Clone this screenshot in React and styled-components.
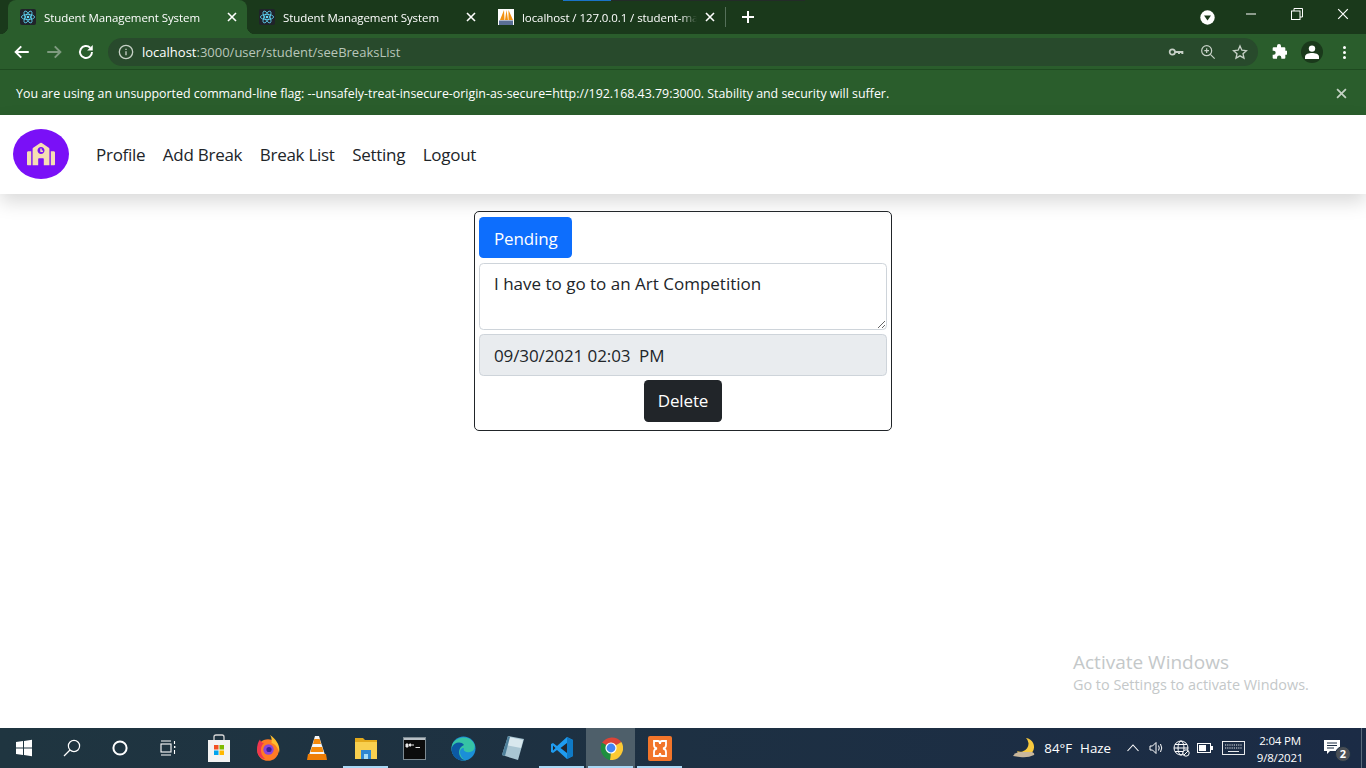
import styled, { createGlobalStyle } from "styled-components";
import { FaSchool } from "react-icons/fa";

const UI_FONT = `"Open Sans", "Noto Sans", sans-serif`;

const GlobalStyle = createGlobalStyle`
  html, body { margin: 0; padding: 0; background: #fff; }
  * { box-sizing: border-box; }
  body { font-family: ${UI_FONT}; }
`;

const ReactFavicon = () => (
  <svg width="16" height="16" viewBox="0 0 16 16">
    <rect width="16" height="16" rx="2" fill="#20232a" />
    <g fill="none" stroke="#61dafb" strokeWidth="0.8">
      <ellipse cx="8" cy="8" rx="6.6" ry="2.6" />
      <ellipse cx="8" cy="8" rx="6.6" ry="2.6" transform="rotate(60 8 8)" />
      <ellipse cx="8" cy="8" rx="6.6" ry="2.6" transform="rotate(120 8 8)" />
    </g>
    <circle cx="8" cy="8" r="1.3" fill="#61dafb" />
  </svg>
);

const PmaFavicon = () => (
  <svg width="16" height="16" viewBox="0 0 16 16">
    <rect width="16" height="16" fill="#fff" />
    <path d="M2 11 L6 1 L6.5 11Z M7 11 L8.5 1 L10 11Z M10.5 11 L10.5 1 L15 11Z" fill="#f29111" />
    <rect x="1" y="11.5" width="14" height="4.5" fill="#5a6f96" />
  </svg>
);

const CloseGlyph = ({ size = 10, color = "#fff", width = 1.6 }) => (
  <svg width={size} height={size} viewBox="0 0 10 10">
    <path d="M1 1 L9 9 M9 1 L1 9" stroke={color} strokeWidth={width} fill="none" />
  </svg>
);

const ToolIcon = ({ children, size = 20, view = 24 }) => (
  <svg width={size} height={size} viewBox={`0 0 ${view} ${view}`} fill="none">
    {children}
  </svg>
);

const TABS = [
  { title: "Student Management System", icon: <ReactFavicon />, active: true },
  { title: "Student Management System", icon: <ReactFavicon /> },
  { title: "localhost / 127.0.0.1 / student-ma", icon: <PmaFavicon />, divider: true },
];

const NAV_LINKS = ["Profile", "Add Break", "Break List", "Setting", "Logout"];

const TaskIcons = {
  windows: (
    <svg width="18" height="18" viewBox="0 0 18 18" fill="#fff">
      <path d="M1 3 L8 2 V8.4 H1Z M9 1.9 L17 .8 V8.4 H9Z M1 9.5 H8 V16 L1 15Z M9 9.5 H17 V17.2 L9 16.1Z" />
    </svg>
  ),
  search: (
    <svg width="18" height="18" viewBox="0 0 18 18" fill="none" stroke="#fff" strokeWidth="1.2">
      <circle cx="11" cy="7" r="5.6" />
      <path d="M7 11 L1 17" />
    </svg>
  ),
  cortana: (
    <svg width="18" height="18" viewBox="0 0 18 18" fill="none" stroke="#fff" strokeWidth="2">
      <circle cx="9" cy="9" r="6.6" />
    </svg>
  ),
  taskView: (
    <svg width="18" height="18" viewBox="0 0 18 18" fill="none" stroke="#fff" strokeWidth="1.1">
      <rect x="2" y="5" width="10" height="8" />
      <path d="M2 2 H12 M2 16 H12 M15.5 2 V5 M15.5 11 V15" />
      <rect x="15" y="7" width="1.4" height="2" fill="#fff" stroke="none" />
    </svg>
  ),
  store: (
    <svg width="24" height="28" viewBox="0 0 24 28">
      <path d="M7 7 V3 Q7 1 9 1 H15 Q17 1 17 3 V7" fill="none" stroke="#d8d8d8" strokeWidth="1.3" />
      <rect x="1" y="6" width="22" height="22" fill="#f3f3f3" />
      <rect x="7" y="11" width="4.5" height="4.5" fill="#f25022" />
      <rect x="12.5" y="11" width="4.5" height="4.5" fill="#7fba00" />
      <rect x="7" y="16.5" width="4.5" height="4.5" fill="#00a4ef" />
      <rect x="12.5" y="16.5" width="4.5" height="4.5" fill="#ffb900" />
    </svg>
  ),
  firefox: (
    <svg width="24" height="26" viewBox="0 0 24 26">
      <circle cx="12" cy="15" r="10.8" fill="#ff7a24" />
      <path d="M14 0 C21 5 24.5 11 23 18 C22 12 19 9 15.5 8 C16 5 15.5 2 14 0Z" fill="#ffbd2e" />
      <path d="M1.2 15 C1 10 2 7 4 4.5 C4.5 7 6 8 8 8 C4.5 11 3 18 9 24 C4 23.5 1.3 20 1.2 15Z" fill="#f0354f" />
      <circle cx="12.5" cy="14.5" r="5.2" fill="#8c44d8" />
      <circle cx="13" cy="14.5" r="2.6" fill="#3a1f9b" />
    </svg>
  ),
  vlc: (
    <svg width="22" height="26" viewBox="0 0 22 26">
      <path d="M9 1 H13 L19 20 H3Z" fill="#f6f6f6" />
      <path d="M8.3 4 H13.7 L15 9 H7Z M5.8 12 H16.2 L17.5 17 H4.5Z" fill="#f58a0b" />
      <path d="M2 19 H20 L21 25 H1Z" fill="#ef7e06" />
    </svg>
  ),
  explorer: (
    <svg width="24" height="24" viewBox="0 0 24 24">
      <path d="M1 2 H9 L11 4 H23 V8 H1Z" fill="#e3a91b" />
      <rect x="1" y="6" width="22" height="17" fill="#f8cf4f" />
      <rect x="7" y="14" width="10" height="9" fill="#2e86d1" />
      <rect x="10" y="18" width="4" height="5" fill="#a8dcf5" />
    </svg>
  ),
  cmd: (
    <svg width="23" height="25" viewBox="0 0 23 25">
      <rect x=".5" y="1.5" width="22" height="22" fill="#0c0c0c" stroke="#7d8a92" />
      <rect x="1" y="2" width="21" height="2" fill="#b8c0c6" />
      <path d="M3 8 H5 V11 H3Z M6.5 8 H8 V10 H6.5Z M9 9 H11 M12.5 11.5 H17" stroke="#e8e8e8" strokeWidth="1" fill="#e8e8e8" />
    </svg>
  ),
  edge: (
    <svg width="25" height="25" viewBox="0 0 25 25">
      <circle cx="12.5" cy="12.5" r="12" fill="#1b8fd8" />
      <path d="M2 7 C6 1 17 -1 22 6 C25 10 24 15 19 16 C15 17 11.5 15 13 12 C9 12 8 16 10 20 C11 22 13 24 15 24.5 C8 26 0 20 .6 12 C.7 10 1 9 2 7Z" fill="#36c4a5" />
      <path d="M.6 12 C3 6 10 5 13 9 C10 10 7 14 8.5 19 C9.5 22 12 24 15 24.5 C7 26 0 20 .6 12Z" fill="#0c59a4" />
    </svg>
  ),
  notepad: (
    <svg width="24" height="26" viewBox="0 0 24 26">
      <path d="M7 1 L23 4 L17 25 L1 20Z" fill="#a9c6d3" />
      <path d="M8 2 L22 5 L20 13 L5 10Z" fill="#d8e8ee" />
      <path d="M1 20 L7 1 L9 2 L4 21Z" fill="#4d7f9a" />
    </svg>
  ),
  vscode: (
    <svg width="24" height="24" viewBox="0 0 24 24">
      <path d="M17 1 L23 4 V20 L17 23 L7 14 L3 17 L1 16 V8 L3 7 L7 10Z" fill="#1f9cf0" />
      <path d="M17 7 L10.5 12 L17 17Z" fill="#23262e" />
      <path d="M3 9.5 L5.5 12 L3 14.5Z" fill="#23262e" />
      <path d="M17 1 L23 4 V20 L17 23Z" fill="#0f7ac6" />
    </svg>
  ),
  chrome: (
    <svg width="24" height="24" viewBox="0 0 24 24">
      <path d="M12 12 L3 6.8 A12 12 0 0 1 22.4 6 Z" fill="#db4437" />
      <path d="M12 12 L22.4 6 A12 12 0 0 1 11 24 Z" fill="#fcc934" />
      <path d="M12 12 L11 24 A12 12 0 0 1 3 6.8 Z" fill="#1e8e3e" />
      <circle cx="12" cy="12" r="5.6" fill="#fff" />
      <circle cx="12" cy="12" r="4.4" fill="#4285f4" />
    </svg>
  ),
  xampp: (
    <svg width="24" height="25" viewBox="0 0 24 25">
      <rect width="24" height="25" rx="2" fill="#f2752a" />
      <path d="M6 5 H10 Q12 5 12 8 Q12 5 14 5 H18 V9 Q18 12 15 12.5 Q18 13 18 16 V20 H14 Q12 20 12 17 Q12 20 10 20 H6 V16 Q6 13 9 12.5 Q6 12 6 9Z" fill="none" stroke="#fff" strokeWidth="1.8" />
    </svg>
  ),
};

const SYSTEM_ITEMS = [{ id: "windows" }, { id: "search" }, { id: "cortana" }, { id: "taskView" }];

const PINNED_ITEMS = [
  { id: "store" },
  { id: "firefox" },
  { id: "vlc" },
  { id: "explorer", open: true },
  { id: "cmd" },
  { id: "edge" },
  { id: "notepad" },
  { id: "vscode", open: true },
  { id: "chrome", open: true, current: true },
  { id: "xampp", open: true },
];

export default function App() {
  return (
    <Screen>
      <GlobalStyle />
      <TabStrip>
        {TABS.map((tab, index) => (
          <Tab key={index} $active={tab.active}>
            <Favicon>{tab.icon}</Favicon>
            <TabTitle>{tab.title}</TabTitle>
            <TabClose>
              <CloseGlyph />
            </TabClose>
          </Tab>
        ))}
        <TabDivider />
        <NewTab>
          <svg width="14" height="14" viewBox="0 0 14 14">
            <path d="M7 1 V13 M1 7 H13" stroke="#fff" strokeWidth="2" />
          </svg>
        </NewTab>
        <ProfileBadge>
          <svg width="15" height="15" viewBox="0 0 15 15">
            <circle cx="7.5" cy="7.5" r="7.2" fill="#fff" />
            <path d="M4 5.5 H11 L7.5 10.5Z" fill="#1a391b" />
          </svg>
        </ProfileBadge>
        <WindowButton>
          <svg width="12" height="12" viewBox="0 0 12 12">
            <path d="M1 6 H11" stroke="#fff" />
          </svg>
        </WindowButton>
        <WindowButton>
          <svg width="12" height="12" viewBox="0 0 12 12" fill="none" stroke="#fff">
            <rect x=".5" y="3" width="8.5" height="8.5" />
            <path d="M3 3 V.5 H11.5 V9 H9" />
          </svg>
        </WindowButton>
        <WindowButton>
          <CloseGlyph size={12} width={1} />
        </WindowButton>
        <LoadingStripe />
      </TabStrip>

      <Toolbar>
        <NavIcon>
          <ToolIcon size={18}>
            <path d="M21 12 H4 M11 4.5 L3.5 12 L11 19.5" stroke="#fff" strokeWidth="2.6" />
          </ToolIcon>
        </NavIcon>
        <NavIcon>
          <ToolIcon size={18}>
            <path d="M3 12 H20 M13 4.5 L20.5 12 L13 19.5" stroke="#7f9b80" strokeWidth="2.6" />
          </ToolIcon>
        </NavIcon>
        <NavIcon>
          <ToolIcon size={18}>
            <path d="M20 12 A8 8 0 1 1 17.6 6.3" stroke="#fff" strokeWidth="2.6" />
            <path d="M21 2.5 V10 H13.5Z" fill="#fff" />
          </ToolIcon>
        </NavIcon>
        <Omnibox>
          <InfoIcon>
            <ToolIcon size={16}>
              <circle cx="12" cy="12" r="10" stroke="#c6d0c6" strokeWidth="2" />
              <path d="M12 11 V17 M12 7 V9" stroke="#c6d0c6" strokeWidth="2" />
            </ToolIcon>
          </InfoIcon>
          <UrlText>
            <UrlHost>localhost</UrlHost>:3000/user/student/seeBreaksList
          </UrlText>
          <OmniActions>
            <ToolIcon size={16}>
              <circle cx="6.5" cy="12" r="4" stroke="#c6d0c6" strokeWidth="2.6" />
              <path d="M10 10.5 H23 V15 H20 V13.5 H18 V15 H15 V13.5 H10Z" fill="#c6d0c6" />
            </ToolIcon>
            <ToolIcon size={16}>
              <circle cx="10" cy="10" r="7.5" stroke="#c6d0c6" strokeWidth="1.8" />
              <path d="M15.5 15.5 L22 22 M10 6.5 V13.5 M6.5 10 H13.5" stroke="#c6d0c6" strokeWidth="1.8" />
            </ToolIcon>
            <ToolIcon size={16}>
              <path d="M12 3 L14.8 9.3 L21.6 10 L16.5 14.6 L18 21.3 L12 17.8 L6 21.3 L7.5 14.6 L2.4 10 L9.2 9.3Z" stroke="#c6d0c6" strokeWidth="2" />
            </ToolIcon>
          </OmniActions>
        </Omnibox>
        <ToolbarActions>
          <ToolIcon size={16}>
            <path d="M9 3 A3 3 0 0 1 15 3 V5 H20 A1.5 1.5 0 0 1 21.5 6.5 V10 H23 A3 3 0 0 1 23 16 H21.5 V20.5 A1.5 1.5 0 0 1 20 22 H15.5 V20.5 A3 3 0 0 0 9 20.5 V22 H4 A1.5 1.5 0 0 1 2.5 20.5 V16 H4 A3 3 0 0 0 4 10 H2.5 V6.5 A1.5 1.5 0 0 1 4 5 H9Z" fill="#fff" />
          </ToolIcon>
          <Avatar>
            <svg width="14" height="14" viewBox="0 0 14 14" fill="#fff">
              <circle cx="7" cy="3.6" r="3.2" />
              <path d="M0 14 V11.5 C0 9 4 8 7 8 C10 8 14 9 14 11.5 V14Z" />
            </svg>
          </Avatar>
          <MenuDots>
            <span />
            <span />
            <span />
          </MenuDots>
        </ToolbarActions>
      </Toolbar>

      <InfoBar>
        <InfoText>
          You are using an unsupported command-line flag: --unsafely-treat-insecure-origin-as-secure=http://192.168.43.79:3000. Stability and security will suffer.
        </InfoText>
        <CloseGlyph size={11} color="#c4d2c4" width={1.6} />
      </InfoBar>

      <Navbar>
        <Logo>
          <FaSchool size={28} color="#f5deb3" />
        </Logo>
        <NavList>
          {NAV_LINKS.map((link) => (
            <NavLink key={link}>{link}</NavLink>
          ))}
        </NavList>
      </Navbar>

      <Main>
        <BreakCard>
          <StatusButton>Pending</StatusButton>
          <ReasonArea readOnly value="I have to go to an Art Competition" />
          <DateField disabled value={"09/30/2021 02:03\u00a0\u00a0PM"} />
          <CardFooter>
            <DeleteButton>Delete</DeleteButton>
          </CardFooter>
        </BreakCard>
        <Watermark>
          <WatermarkTitle>Activate Windows</WatermarkTitle>
          <WatermarkHint>Go to Settings to activate Windows.</WatermarkHint>
        </Watermark>
      </Main>

      <Taskbar>
        <SystemButtons>
          {SYSTEM_ITEMS.map((item) => (
            <TaskItem key={item.id} $width={48}>
              {TaskIcons[item.id]}
            </TaskItem>
          ))}
        </SystemButtons>
        <PinnedApps>
          {PINNED_ITEMS.map((item) => (
            <TaskItem key={item.id} $width={49} $open={item.open} $current={item.current}>
              {TaskIcons[item.id]}
            </TaskItem>
          ))}
        </PinnedApps>
        <Tray>
          <Weather>
            <svg width="24" height="22" viewBox="0 0 24 22">
              <path d="M14 1 A9 9 0 1 1 5 14 A8 8 0 0 0 14 1Z" fill="#f7c93e" />
              <path d="M1 19 Q3 15 8 15 H20 Q23 16 22 18 Q16 21 8 20Z" fill="#c9b79c" />
            </svg>
            <WeatherText>84°F</WeatherText>
            <WeatherText>Haze</WeatherText>
          </Weather>
          <TrayIcons>
            <TrayCell>
              <svg width="14" height="14" viewBox="0 0 14 14" fill="none" stroke="#fff" strokeWidth="1.1">
                <path d="M1.5 10 L7 4 L12.5 10" />
              </svg>
            </TrayCell>
            <TrayCell>
              <svg width="16" height="16" viewBox="0 0 16 16" fill="none" stroke="#fff" strokeWidth="1">
                <path d="M1 6 H3.5 L7 2.5 V13.5 L3.5 10 H1Z M9.5 5.5 Q11 8 9.5 10.5 M11.5 4 Q14 8 11.5 12 " />
              </svg>
            </TrayCell>
            <TrayCell>
              <svg width="17" height="17" viewBox="0 0 17 17" fill="none" stroke="#fff" strokeWidth="1">
                <circle cx="8" cy="8" r="7" />
                <ellipse cx="8" cy="8" rx="3" ry="7" />
                <path d="M1 8 H15 M2 4.5 H14 M2 11.5 H14" />
                <circle cx="13" cy="13" r="3.2" fill="#1c2e44" />
                <path d="M11 15 L15 11" />
              </svg>
            </TrayCell>
            <TrayCell>
              <svg width="16" height="12" viewBox="0 0 16 12" fill="none" stroke="#fff">
                <rect x=".5" y="1.5" width="13" height="9" />
                <rect x="2" y="3" width="7" height="6" fill="#fff" stroke="none" />
                <rect x="14" y="4" width="2" height="4" fill="#fff" stroke="none" />
              </svg>
            </TrayCell>
            <TrayCell $wide>
              <svg width="23" height="14" viewBox="0 0 23 14" fill="none" stroke="#fff" strokeWidth="0.9">
                <rect x=".5" y=".5" width="22" height="13" />
                <path d="M3 4 H20 M3 7 H20" strokeDasharray="1.2 1" />
                <path d="M6 10.5 H17" />
              </svg>
            </TrayCell>
          </TrayIcons>
          <Clock>
            <span>2:04 PM</span>
            <span>9/8/2021</span>
          </Clock>
          <Notifications>
            <svg width="18" height="16" viewBox="0 0 18 16" fill="#fff">
              <path d="M0 0 H16 V11 H6 L3 14 V11 H0Z" />
              <path d="M3 3 H13 M3 5.5 H13 M3 8 H10" stroke="#1c2e44" strokeWidth="1" />
            </svg>
            <NotifyCount>2</NotifyCount>
          </Notifications>
          <ShowDesktop />
        </Tray>
      </Taskbar>
    </Screen>
  );
}

const Screen = styled.div`
  display: flex;
  flex-direction: column;
  width: 100%;
  height: 100vh;
  overflow: hidden;
`;

const TabStrip = styled.div`
  position: relative;
  display: flex;
  align-items: center;
  height: 34px;
  padding-left: 8px;
  background: #1a391b;
  flex-shrink: 0;
`;

const LoadingStripe = styled.div`
  position: absolute;
  top: 0;
  left: 563px;
  width: 242px;
  height: 1px;
  background: linear-gradient(to right, #1a73c8 0 48px, #232b28 48px);
`;

const Tab = styled.div`
  position: relative;
  display: flex;
  align-items: center;
  width: 239px;
  height: 34px;
  padding: 0 10px 0 12px;
  border-radius: 8px 8px 0 0;
  color: #fff;
  background: ${(props) => (props.$active ? "#2a5d2c" : "transparent")};

  &::before,
  &::after {
    content: "";
    display: ${(props) => (props.$active ? "block" : "none")};
    position: absolute;
    bottom: 0;
    width: 8px;
    height: 8px;
  }
  &::before {
    left: -8px;
    background: radial-gradient(circle at 0 0, transparent 8px, #2a5d2c 8.5px);
  }
  &::after {
    right: -8px;
    background: radial-gradient(circle at 100% 0, transparent 8px, #2a5d2c 8.5px);
  }
`;

const Favicon = styled.span`
  display: flex;
  flex-shrink: 0;
  margin-right: 8px;
`;

const TabTitle = styled.span`
  flex: 1;
  min-width: 0;
  overflow: hidden;
  white-space: nowrap;
  font-size: 11.5px;
  letter-spacing: -0.08px;
  -webkit-mask-image: linear-gradient(to left, transparent 0, #000 16px);
`;

const TabClose = styled.span`
  display: flex;
  margin-left: 8px;
  flex-shrink: 0;
`;

const TabDivider = styled.span`
  width: 1px;
  height: 20px;
  background: #55705a;
`;

const NewTab = styled.span`
  display: flex;
  margin-left: 15px;
`;

const ProfileBadge = styled.span`
  display: flex;
  margin-left: auto;
  margin-right: 13px;
`;

const WindowButton = styled.span`
  display: flex;
  justify-content: center;
  width: 46px;
  align-self: flex-start;
  padding-top: 8px;
`;

const Toolbar = styled.div`
  display: flex;
  align-items: center;
  height: 36px;
  padding: 1px 8px 0 6px;
  background: #2a5d2c;
  border-bottom: 1px solid #1e4a20;
  flex-shrink: 0;
`;

const NavIcon = styled.span`
  display: flex;
  justify-content: center;
  width: 32px;
`;

const Omnibox = styled.div`
  display: flex;
  align-items: center;
  flex: 0 0 1150px;
  height: 28px;
  margin-left: 6px;
  padding: 0 10px;
  border-radius: 14px;
  background: #284a2c;
`;

const InfoIcon = styled.span`
  display: flex;
  margin-right: 8px;
`;

const UrlText = styled.span`
  flex: 1;
  font-size: 13px;
  color: #b9c6ba;
`;

const UrlHost = styled.span`
  color: #fff;
`;

const OmniActions = styled.span`
  display: flex;
  gap: 16px;
`;

const ToolbarActions = styled.div`
  display: flex;
  align-items: center;
  margin-left: 13px;
`;

const Avatar = styled.span`
  display: flex;
  align-items: center;
  justify-content: center;
  width: 22px;
  height: 22px;
  margin-left: 14px;
  border-radius: 50%;
  background: #1a391b;
`;

const MenuDots = styled.span`
  display: flex;
  flex-direction: column;
  gap: 2px;
  margin-left: 20px;

  span {
    width: 3px;
    height: 3px;
    border-radius: 50%;
    background: #fff;
  }
`;

const InfoBar = styled.div`
  display: flex;
  align-items: center;
  justify-content: space-between;
  height: 45px;
  padding: 1px 19px 0 16px;
  background: #2a5d2c;
  flex-shrink: 0;
`;

const InfoText = styled.span`
  font-size: 12.4px;
  color: #fff;
`;

const Navbar = styled.nav`
  position: relative;
  display: flex;
  align-items: center;
  height: 79px;
  padding-left: 13px;
  background: #fff;
  box-shadow: 0 8px 17.6px rgba(0, 0, 0, 0.15);
  flex-shrink: 0;
`;

const Logo = styled.div`
  display: flex;
  align-items: center;
  justify-content: center;
  width: 56px;
  height: 50px;
  margin-bottom: 1px;
  border-radius: 50%;
  background: #7a10f7;
`;

const NavList = styled.div`
  display: flex;
  margin-left: 27px;
  gap: 17.5px;
`;

const NavLink = styled.a`
  font-size: 17px;
  letter-spacing: -0.27px;
  color: #212529;
`;

const Main = styled.main`
  position: relative;
  flex: 1;
  min-height: 0;
  display: flex;
  justify-content: center;
  align-items: flex-start;
  padding-top: 17px;
`;

const BreakCard = styled.div`
  display: flex;
  flex-direction: column;
  align-items: flex-start;
  gap: 4px;
  width: 418px;
  padding: 5px 4px 8px;
  border: 1px solid #212529;
  border-radius: 5px;
`;

const Button = styled.button`
  height: 41px;
  padding: 0 14px;
  border: 0;
  border-radius: 4.4px;
  font-family: ${UI_FONT};
  font-size: 17px;
  letter-spacing: -0.15px;
  color: #fff;
`;

const StatusButton = styled(Button)`
  padding-top: 2px;
  padding-left: 15px;
  margin-bottom: 1px;
  background: #0d6efd;
`;

const DeleteButton = styled(Button)`
  height: 42px;
  padding-bottom: 1px;
  background: #212529;
`;

const ReasonArea = styled.textarea`
  display: block;
  width: 100%;
  height: 67px;
  padding: 7px 14px;
  border: 1px solid #ced4da;
  border-radius: 4.4px;
  outline: none;
  font-family: ${UI_FONT};
  font-size: 17px;
  line-height: 26px;
  color: #212529;
`;

const DateField = styled.input`
  display: block;
  width: 100%;
  height: 42px;
  padding: 0 14px;
  border: 1px solid #ced4da;
  border-radius: 4.4px;
  background: #e9ecef;
  font-family: ${UI_FONT};
  font-size: 17px;
  letter-spacing: -0.1px;
  color: #212529;
  opacity: 1;
`;

const CardFooter = styled.div`
  display: flex;
  justify-content: center;
  width: 100%;
`;

const Watermark = styled.div`
  position: absolute;
  left: 1073px;
  top: 455px;
  display: flex;
  flex-direction: column;
  color: #c4c8c9;
`;

const WatermarkTitle = styled.span`
  font-size: 19px;
`;

const WatermarkHint = styled.span`
  font-size: 14.4px;
`;

const Taskbar = styled.footer`
  display: flex;
  height: 40px;
  background: linear-gradient(to right, #1f3540, #1b2b45);
  flex-shrink: 0;
`;

const SystemButtons = styled.div`
  display: flex;
`;

const PinnedApps = styled.div`
  display: flex;
  margin-left: 2px;
`;

const TaskItem = styled.div`
  position: relative;
  display: flex;
  align-items: center;
  justify-content: center;
  width: ${(props) => props.$width}px;
  height: 40px;
  background: ${(props) => (props.$current ? "#4e5f6a" : "transparent")};

  &::after {
    content: "";
    display: ${(props) => (props.$open ? "block" : "none")};
    position: absolute;
    left: 2px;
    right: 2px;
    bottom: 0;
    height: 2px;
    background: #a9d8f5;
  }
`;

const Tray = styled.div`
  display: flex;
  align-items: center;
  margin-left: auto;
  color: #fff;
`;

const Weather = styled.div`
  display: flex;
  align-items: center;
  gap: 8px;
`;

const WeatherText = styled.span`
  font-size: 13.3px;
`;

const TrayIcons = styled.div`
  display: flex;
  align-items: center;
  margin-left: 10px;
`;

const TrayCell = styled.span`
  display: flex;
  justify-content: center;
  width: ${(props) => (props.$wide ? "32px" : "24px")};
`;

const Clock = styled.div`
  display: flex;
  flex-direction: column;
  align-items: center;
  width: 62px;
  margin-top: 1px;
  font-size: 11.5px;
  letter-spacing: -0.2px;
  line-height: 17px;
`;

const Notifications = styled.div`
  position: relative;
  display: flex;
  margin: 0 19px 0 13px;
`;

const NotifyCount = styled.span`
  position: absolute;
  right: -9px;
  bottom: -6px;
  width: 16px;
  height: 16px;
  border-radius: 50%;
  border: 1px solid #1c2e44;
  background: #4a4f55;
  font-size: 11px;
  font-weight: 700;
  line-height: 14px;
  text-align: center;
`;

const ShowDesktop = styled.div`
  width: 1px;
  height: 40px;
  margin-right: 4px;
  background: #5a6b7c;
`;
